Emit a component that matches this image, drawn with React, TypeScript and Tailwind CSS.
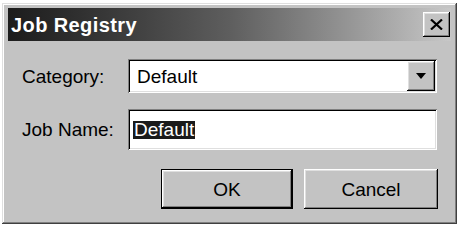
const raised =
  "bg-[#c3c3c3] shadow-[inset_-1px_-1px_#000,inset_1px_1px_#fff,inset_-2px_-2px_#808080,inset_2px_2px_#dfdfdf]"
const sunken =
  "bg-white shadow-[inset_1px_1px_#808080,inset_-1px_-1px_#fff,inset_2px_2px_#000,inset_-2px_-2px_#dfdfdf]"

export default function App() {
  return (
    <div className="w-[462px] h-[225px] bg-white pt-[3px] pl-[2px] font-['Liberation_Sans',Arial,sans-serif]">
      <div className="w-[455px] h-[221px] bg-[#c3c3c3] flex flex-col shadow-[inset_-1px_-1px_#404040,inset_1px_1px_#dfdfdf,inset_-2px_-2px_#808080,inset_2px_2px_#fff] pt-[5px] px-[6px]">
        {/* title bar */}
        <div className="h-[33px] flex items-center justify-between bg-gradient-to-r from-[#1c1c1c] via-[#5e5e5e] to-[#c8c8c8] pl-[3px] pr-[1px]">
          <span className="text-white font-bold text-[20px] tracking-[0.4px] leading-none">Job Registry</span>
          <button className={`${raised} w-[27px] h-[25px] flex items-center justify-center`}>
            <svg width="13" height="11" viewBox="0 0 13 11">
              <path d="M1 0.5 L12 10.5 M12 0.5 L1 10.5" stroke="#000" strokeWidth="2.2" />
            </svg>
          </button>
        </div>

        <div className="flex flex-col pl-[14px] pr-[14px] pt-[18px] text-[19px] text-black">
          {/* category */}
          <div className="flex items-center h-[34px]">
            <span className="w-[106px] leading-none">Category:</span>
            <div className={`${sunken} w-[309px] h-[34px] flex items-center justify-between pl-[9px] pr-[2px]`}>
              <span className="leading-none">Default</span>
              <div className={`${raised} w-[28px] h-[30px] flex items-center justify-center`}>
                <svg width="10" height="6" viewBox="0 0 10 6">
                  <path d="M0 0 H10 L5 6 Z" fill="#000" />
                </svg>
              </div>
            </div>
          </div>

          {/* job name */}
          <div className="flex items-start mt-[16px] h-[41px]">
            <span className="w-[106px] leading-none pt-[11px]">Job Name:</span>
            <div className={`${sunken} w-[309px] h-[41px] pl-[5px] pt-[7px]`}>
              <span className="bg-[#1a1a1a] text-white leading-[18px] inline-block px-[1px]">Default</span>
            </div>
          </div>

          {/* buttons */}
          <div className="flex justify-end gap-[11px] mt-[19px]">
            <button className="w-[132px] h-[40px] bg-[#c3c3c3] border border-black shadow-[inset_-1px_-1px_#000,inset_1px_1px_#fff,inset_-2px_-2px_#808080,inset_2px_2px_#dfdfdf] text-[19px] leading-none">
              OK
            </button>
            <button className={`${raised} w-[134px] h-[40px] text-[19px] leading-none -mr-[1px]`}>
              Cancel
            </button>
          </div>
        </div>
      </div>
    </div>
  )
}
